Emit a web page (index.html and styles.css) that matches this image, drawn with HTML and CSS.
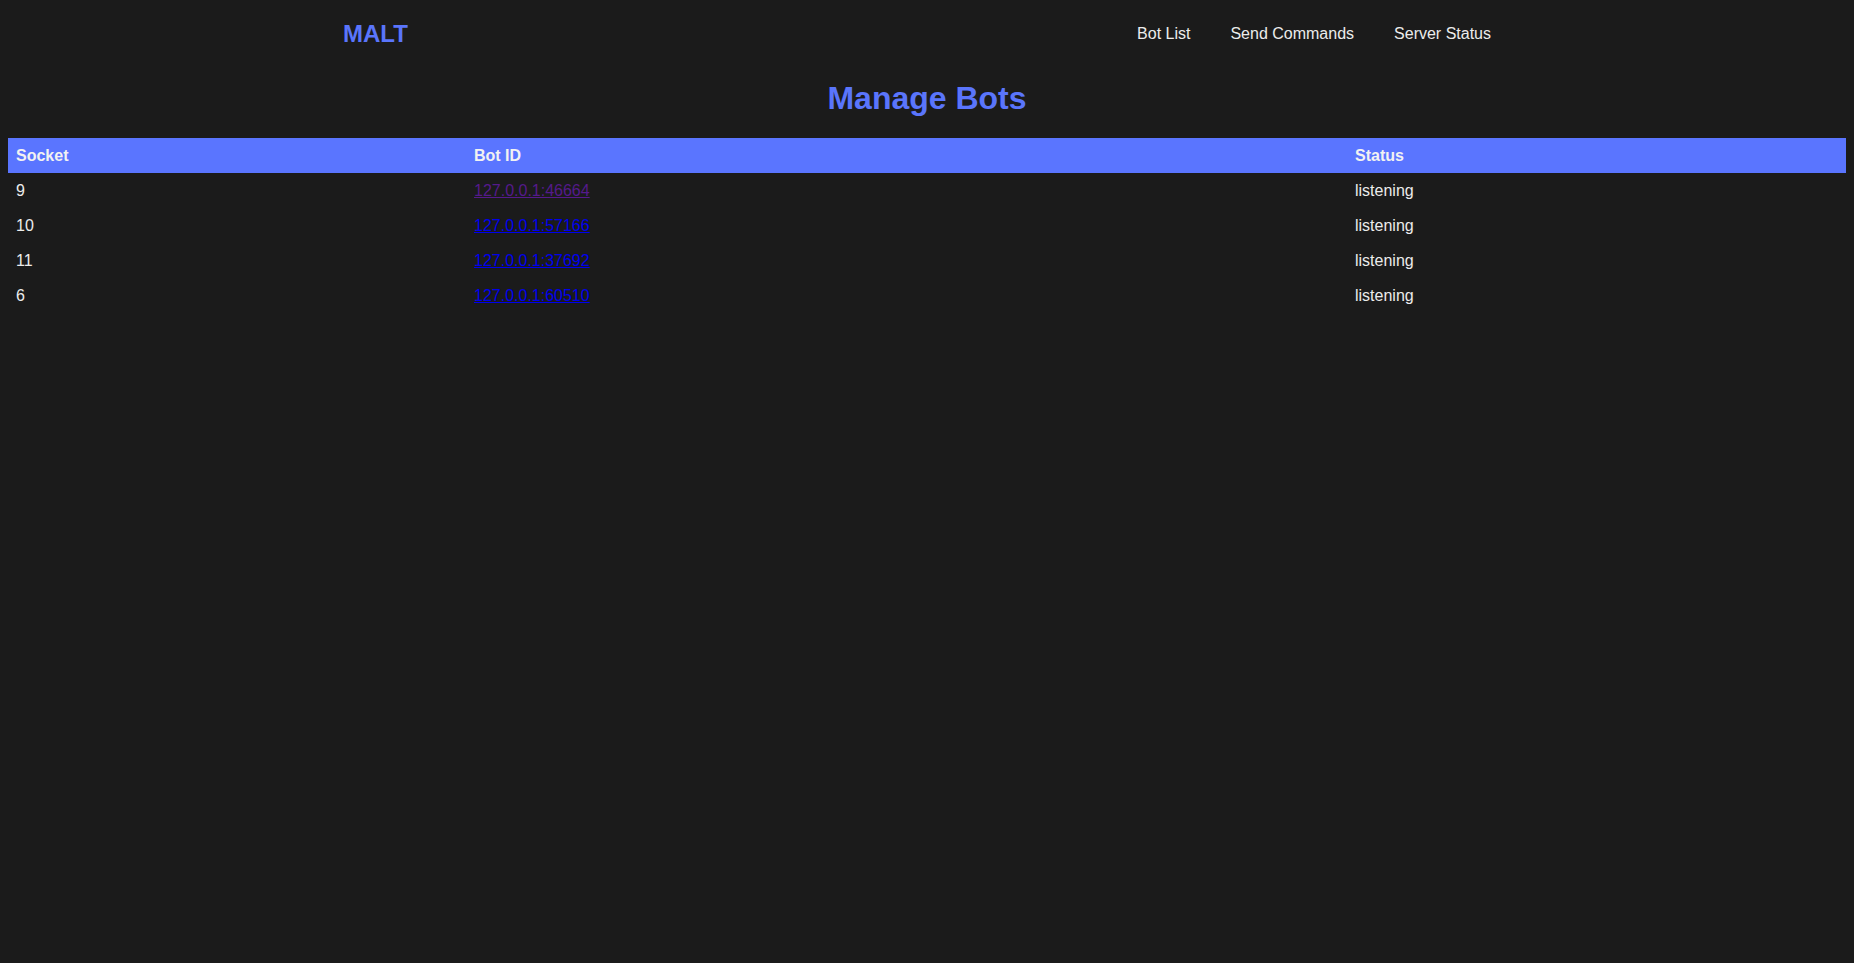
FILE: index.html
```html
<!DOCTYPE html>
<html lang="en">
<head>
<meta charset="utf-8">
<title>MALT - Manage Bots</title>
<link rel="stylesheet" href="styles.css">
</head>
<body>
<header class="site-header">
  <div class="container header-inner">
    <a class="brand" href="#">MALT</a>
    <nav class="nav">
      <a class="nav-link" href="#">Bot List</a>
      <a class="nav-link" href="#">Send Commands</a>
      <a class="nav-link" href="#">Server Status</a>
    </nav>
  </div>
</header>
<main class="main">
  <h1 class="title">Manage Bots</h1>
  <table class="bots">
    <colgroup>
      <col class="col-socket">
      <col class="col-id">
      <col class="col-status">
    </colgroup>
    <thead>
      <tr><th>Socket</th><th>Bot ID</th><th>Status</th></tr>
    </thead>
    <tbody>
      <tr><td>9</td><td><a class="bot-link visited" href="#">127.0.0.1:46664</a></td><td>listening</td></tr>
      <tr><td>10</td><td><a class="bot-link" href="#">127.0.0.1:57166</a></td><td>listening</td></tr>
      <tr><td>11</td><td><a class="bot-link" href="#">127.0.0.1:37692</a></td><td>listening</td></tr>
      <tr><td>6</td><td><a class="bot-link" href="#">127.0.0.1:60510</a></td><td>listening</td></tr>
    </tbody>
  </table>
</main>
</body>
</html>
```

FILE: styles.css
```css
html, body {
  margin: 0;
  padding: 0;
  background: #1b1b1b;
  color: #ececec;
  font-family: "Liberation Sans", Arial, sans-serif;
  font-size: 16px;
}

.site-header {
  padding: 20px 0 10px;
}

.container {
  max-width: 1200px;
  margin: 0 auto;
  padding: 0 15px;
  box-sizing: border-box;
}

.header-inner {
  display: flex;
  align-items: center;
  justify-content: space-between;
}

.brand {
  color: #5a75fc;
  font-size: 24px;
  font-weight: bold;
  text-decoration: none;
  margin-left: 1px;
}

.nav {
  display: flex;
  align-items: center;
}

.nav-link {
  color: #ececec;
  text-decoration: none;
  padding: 0 20px;
}

.nav-link:last-child {
  padding-right: 21px;
}

.main {
  padding: 0 8px;
}

.title {
  margin: 22px 0 20.9px;
  text-align: center;
  font-size: 32px;
  font-weight: bold;
  color: #5a75fc;
}

.bots {
  width: 100%;
  border-collapse: collapse;
  table-layout: fixed;
}

.col-socket { width: 458px; }
.col-id { width: 881px; }
.col-status { width: auto; }

.bots th,
.bots td {
  text-align: left;
  padding: 8px;
  line-height: 19px;
}

.bots thead tr {
  background: #5a75ff;
}

.bots th {
  color: #f2f2f2;
  font-weight: bold;
}

.bot-link {
  color: #0000ee;
  text-decoration: underline;
}

.bot-link.visited {
  color: #551a8b;
}
```
